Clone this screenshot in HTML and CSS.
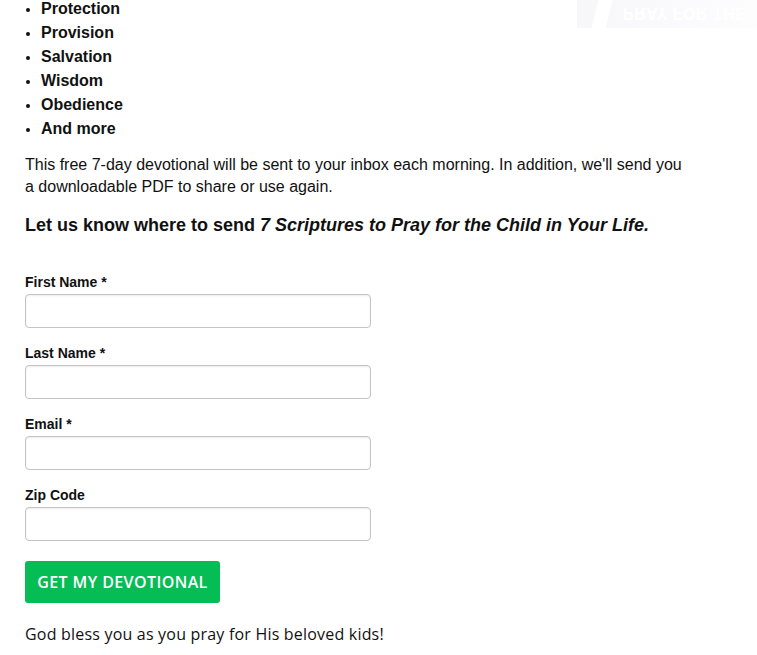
FILE: index.html
```html
<!DOCTYPE html>
<html>
<head>
<meta charset="utf-8">
<link rel="stylesheet" href="styles.css">
</head>
<body>
<div class="banner"><span class="banner-slash"></span><span class="banner-text">PRAY FOR THE</span></div>
<main class="content">
  <ul class="topics">
    <li>Protection</li>
    <li>Provision</li>
    <li>Salvation</li>
    <li>Wisdom</li>
    <li>Obedience</li>
    <li>And more</li>
  </ul>
  <p class="intro">This free 7-day devotional will be sent to your inbox each morning. In addition, we'll send you a downloadable PDF to share or use again.</p>
  <h2 class="cta">Let us know where to send <em>7 Scriptures to Pray for the Child in Your Life.</em></h2>
  <form class="signup">
    <label class="field"><span class="label">First Name *</span><input type="text" class="input"></label>
    <label class="field"><span class="label">Last Name *</span><input type="text" class="input"></label>
    <label class="field"><span class="label">Email *</span><input type="email" class="input"></label>
    <label class="field"><span class="label">Zip Code</span><input type="text" class="input"></label>
    <button type="button" class="submit">GET MY DEVOTIONAL</button>
  </form>
  <p class="blessing">God bless you as you pray for His beloved kids!</p>
</main>
</body>
</html>
```
FILE: styles.css
```css
html, body {
  margin: 0;
  padding: 0;
  background: #fff;
  overflow: hidden;
}
body {
  font-family: "Liberation Sans", Arial, sans-serif;
  color: #111;
  position: relative;
}
.banner {
  position: absolute;
  top: 0;
  left: 577px;
  width: 180px;
  height: 28px;
  background: linear-gradient(90deg, #f7f7fa 0%, #fafafc 50%, #fdfdfe 100%);
  overflow: hidden;
}
.banner-slash {
  position: absolute;
  left: 18px;
  top: -4px;
  width: 14px;
  height: 36px;
  background: #fff;
  transform: skewX(-14deg);
}
.banner-text {
  position: absolute;
  left: 46px;
  top: 4px;
  font: bold 16px/18px "Liberation Sans", sans-serif;
  color: #fff;
  transform: scaleY(-1);
  letter-spacing: 0.5px;
  white-space: nowrap;
}
.content {
  padding-left: 25px;
  width: 662px;
}
.topics {
  margin: -3px 0 0;
  padding-left: 16px;
  font-size: 16px;
  font-weight: bold;
  line-height: 24px;
}
.topics li::marker {
  font-size: 13px;
}
.intro {
  margin: 13px 0 0;
  font-size: 16px;
  line-height: 22px;
}
.cta {
  margin: 16px 0 0;
  font-size: 18px;
  line-height: 22px;
  font-weight: bold;
}
.signup {
  margin-top: 38px;
  display: flex;
  flex-direction: column;
  align-items: flex-start;
}
.field {
  display: flex;
  flex-direction: column;
  gap: 4px;
  margin-bottom: 17px;
}
.label {
  font-size: 14px;
  line-height: 16px;
  font-weight: bold;
}
.input {
  box-sizing: border-box;
  width: 346px;
  height: 34px;
  margin: 0;
  border: 1px solid #c4c4c4;
  border-radius: 4px;
  box-shadow: inset 0 1px 2px rgba(0,0,0,0.08);
  background: #fff;
}
.submit {
  margin-top: 3px;
  width: 195px;
  height: 42px;
  border: none;
  border-radius: 3px;
  background: #05bc55;
  color: #fff;
  font-family: "Open Sans", sans-serif;
  font-weight: 600;
  font-size: 16px;
  letter-spacing: 0.4px;
  padding: 0;
  cursor: pointer;
}
.blessing {
  margin: 20px 0 0;
  font-family: "Open Sans", sans-serif;
  font-size: 16px;
  line-height: 22px;
  color: #111;
  letter-spacing: 0.2px;
}
```
